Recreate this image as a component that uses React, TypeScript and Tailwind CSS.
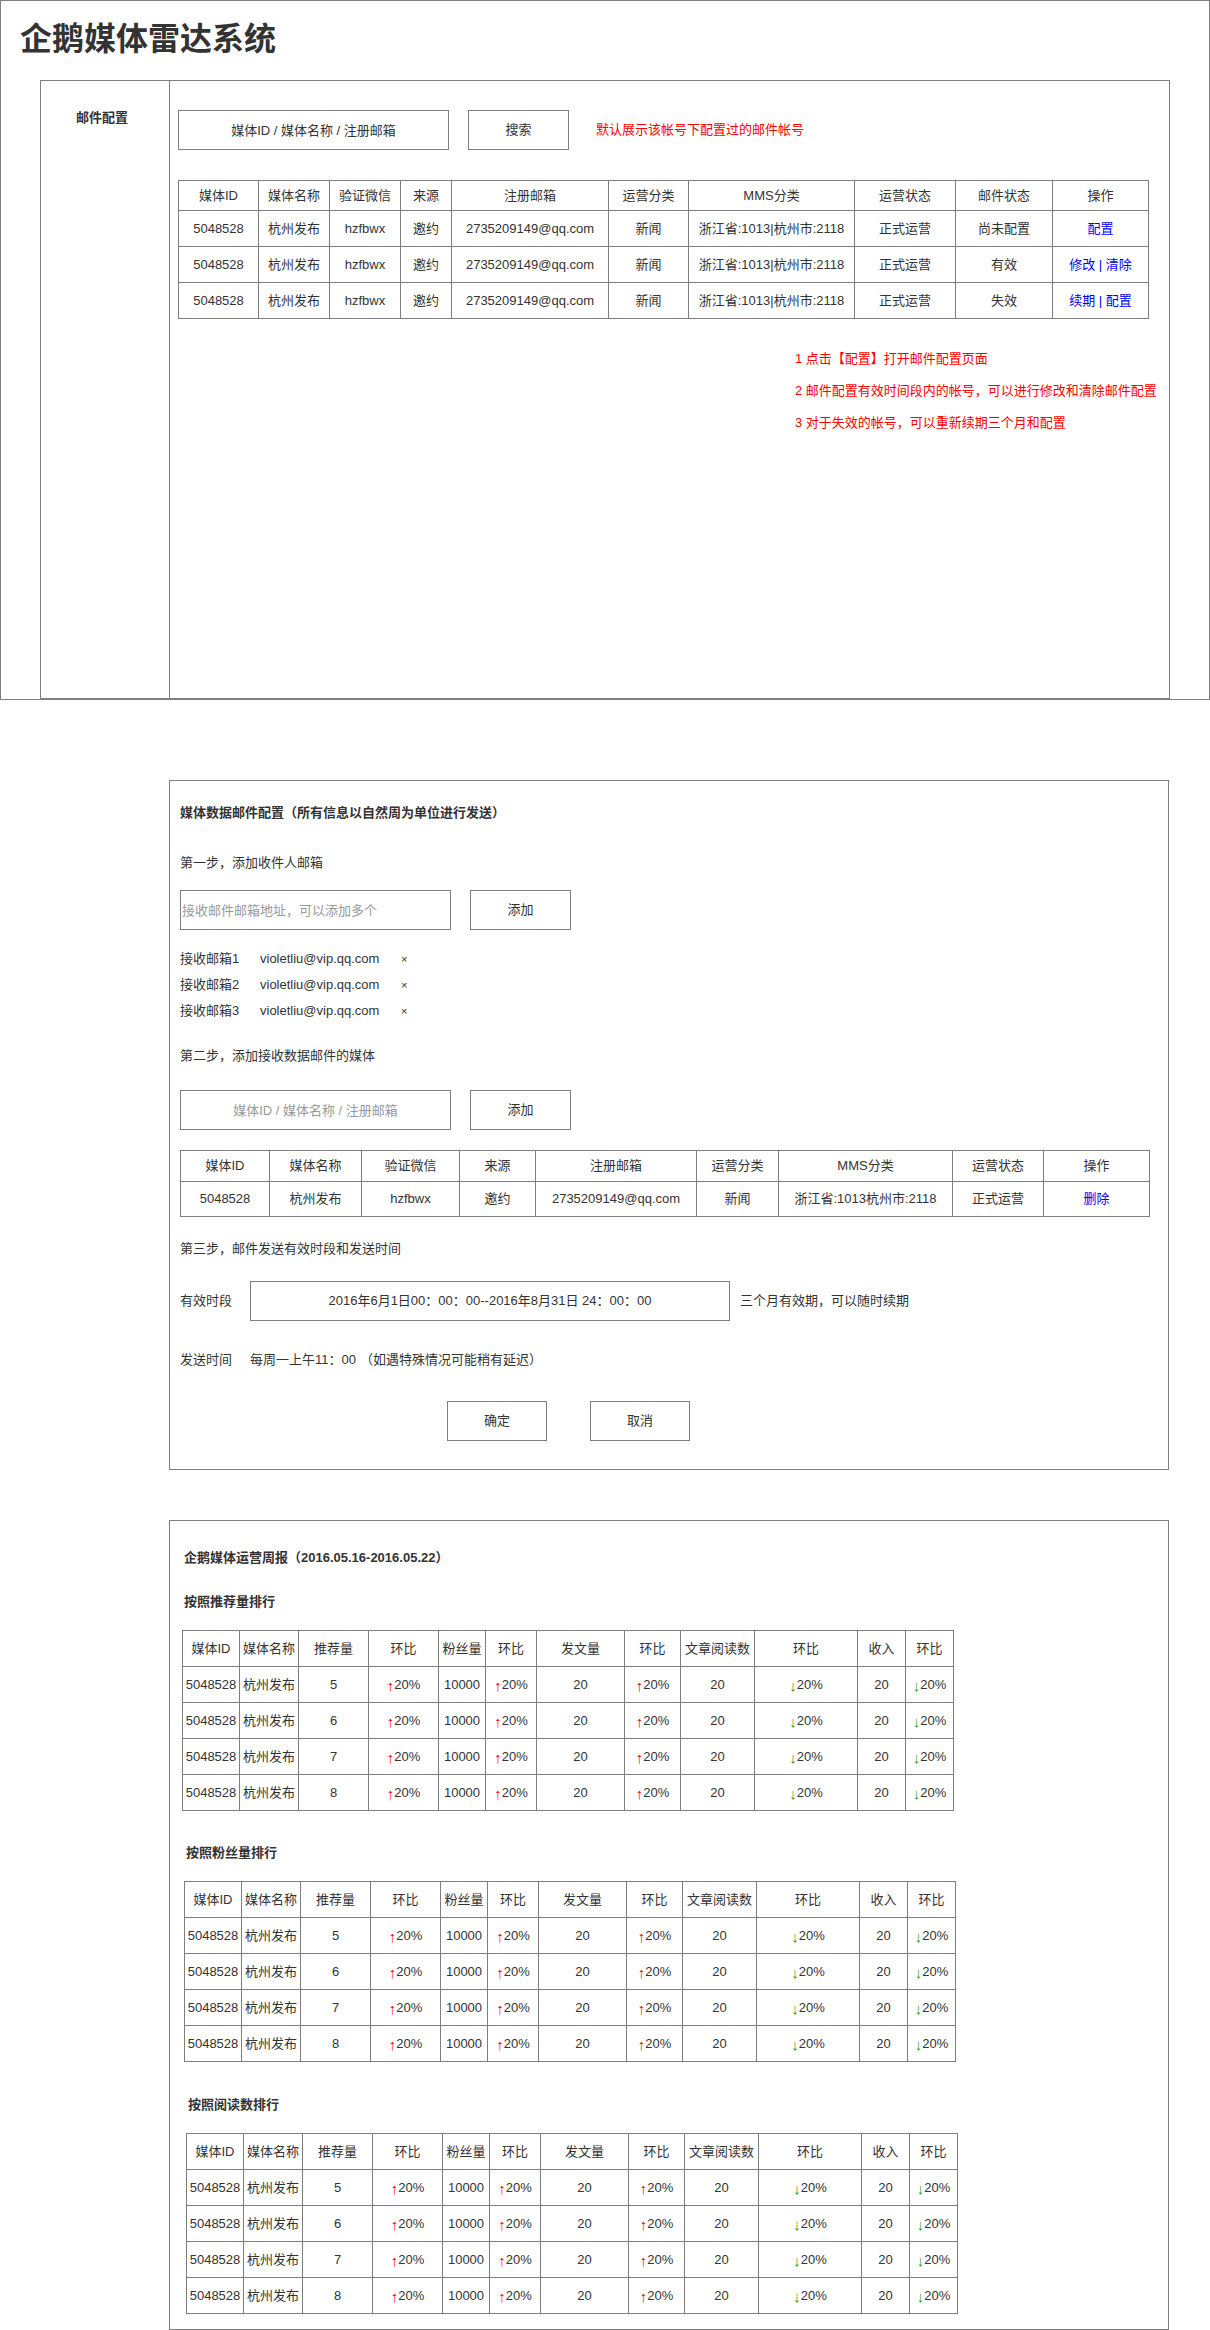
import type { ReactNode } from "react";

const line = "border border-[#7f7f7f]";

type GridProps = {
  cols: string[];
  head: string[];
  rows: ReactNode[][];
  headH: string;
  rowH: string;
  className?: string;
};

function Grid({ cols, head, rows, headH, rowH, className }: GridProps) {
  return (
    <table className={`table-fixed border-collapse ${className ?? ""}`}>
      <colgroup>
        {cols.map((c, i) => (
          <col key={i} className={c} />
        ))}
      </colgroup>
      <thead>
        <tr className={headH}>
          {head.map((h, i) => (
            <th key={i} className={`${line} p-0 font-normal text-center whitespace-nowrap`}>
              {h}
            </th>
          ))}
        </tr>
      </thead>
      <tbody>
        {rows.map((r, i) => (
          <tr key={i} className={rowH}>
            {r.map((c, j) => (
              <td key={j} className={`${line} p-0 text-center whitespace-nowrap`}>
                {c}
              </td>
            ))}
          </tr>
        ))}
      </tbody>
    </table>
  );
}

// thin tall arrows like in the mockup
const Up = () => (
  <span className="inline-block text-[15px] leading-none translate-y-[2px] text-[#ff0000]">↑</span>
);
const Down = () => (
  <span className="inline-block text-[15px] leading-none translate-y-[2px] text-[#1e9a1e]">↓</span>
);
const Link = ({ children }: { children: ReactNode }) => (
  <span className="text-[#0000ff]">{children}</span>
);

function RadarPanel() {
  const base = ["5048528", "杭州发布", "hzfbwx", "邀约", "2735209149@qq.com", "新闻", "浙江省:1013|杭州市:2118", "正式运营"];
  const rows: ReactNode[][] = [
    [...base, "尚未配置", <Link>配置</Link>],
    [...base, "有效", <Link>修改 | 清除</Link>],
    [...base, "失效", <Link>续期 | 配置</Link>],
  ];
  return (
    <div className={`w-[1210px] h-[700px] ${line}`}>
      <h1 className="ml-[19px] mt-[18px] h-[40px] leading-[40px] text-[32px] font-bold">企鹅媒体雷达系统</h1>
      <div className={`ml-[39px] mt-[21px] w-[1130px] h-[619px] ${line} flex`}>
        <div className="w-[129px] border-r border-[#7f7f7f] pl-[35px] pt-[27px]">
          <p className="font-bold leading-[20px]">邮件配置</p>
        </div>
        <div className="flex-1 pl-[8px] pt-[29px]">
          <div className="flex items-center h-[40px]">
            <input
              readOnly
              className={`w-[271px] h-[40px] ${line} text-center outline-none placeholder:text-[#333]`}
              placeholder="媒体ID / 媒体名称 / 注册邮箱"
            />
            <button className={`ml-[19px] w-[101px] h-[40px] ${line}`}>搜索</button>
            <span className="ml-[27px] text-[#ff0000]">默认展示该帐号下配置过的邮件帐号</span>
          </div>
          <Grid
            className="mt-[30px] w-[971px]"
            cols={["w-[80px]", "w-[71px]", "w-[71px]", "w-[51px]", "w-[157px]", "w-[80px]", "w-[166px]", "w-[101px]", "w-[97px]", "w-[96px]"]}
            head={["媒体ID", "媒体名称", "验证微信", "来源", "注册邮箱", "运营分类", "MMS分类", "运营状态", "邮件状态", "操作"]}
            rows={rows}
            headH="h-[30px]"
            rowH="h-[36px]"
          />
          <div className="ml-[617px] mt-[24px] leading-[32px] text-[#ff0000] whitespace-nowrap">
            <p>1 点击【配置】打开邮件配置页面</p>
            <p>2 邮件配置有效时间段内的帐号，可以进行修改和清除邮件配置</p>
            <p>3 对于失效的帐号，可以重新续期三个月和配置</p>
          </div>
        </div>
      </div>
    </div>
  );
}

function MailConfig() {
  const inbox = [1, 2, 3];
  return (
    <section className={`ml-[169px] mt-[80px] w-[1000px] h-[690px] ${line} pl-[10px] pt-[22px]`}>
      <h2 className="font-bold leading-[20px]">媒体数据邮件配置（所有信息以自然周为单位进行发送）</h2>
      <p className="mt-[30px] leading-[20px]">第一步，添加收件人邮箱</p>
      <div className="mt-[17px] flex h-[40px]">
        <input
          readOnly
          className={`w-[271px] h-[40px] ${line} pl-[1px] outline-none placeholder:text-[#999]`}
          placeholder="接收邮件邮箱地址，可以添加多个"
        />
        <button className={`ml-[19px] w-[101px] h-[40px] ${line}`}>添加</button>
      </div>
      <ul className="mt-[16px]">
        {inbox.map((n) => (
          <li key={n} className="flex h-[26px] items-center">
            <span className="w-[80px]">接收邮箱{n}</span>
            <span className="w-[141px]">violetliu@vip.qq.com</span>
            <span className="text-[11px]">×</span>
          </li>
        ))}
      </ul>
      <p className="mt-[22px] leading-[20px]">第二步，添加接收数据邮件的媒体</p>
      <div className="mt-[24px] flex h-[40px]">
        <input
          readOnly
          className={`w-[271px] h-[40px] ${line} text-center outline-none placeholder:text-[#999]`}
          placeholder="媒体ID / 媒体名称 / 注册邮箱"
        />
        <button className={`ml-[19px] w-[101px] h-[40px] ${line}`}>添加</button>
      </div>
      <Grid
        className="mt-[20px] w-[970px]"
        cols={["w-[89px]", "w-[92px]", "w-[98px]", "w-[76px]", "w-[161px]", "w-[82px]", "w-[174px]", "w-[91px]", "w-[106px]"]}
        head={["媒体ID", "媒体名称", "验证微信", "来源", "注册邮箱", "运营分类", "MMS分类", "运营状态", "操作"]}
        rows={[["5048528", "杭州发布", "hzfbwx", "邀约", "2735209149@qq.com", "新闻", "浙江省:1013杭州市:2118", "正式运营", <Link>删除</Link>]]}
        headH="h-[31px]"
        rowH="h-[35px]"
      />
      <p className="mt-[22px] leading-[20px]">第三步，邮件发送有效时段和发送时间</p>
      <div className="mt-[22px] flex items-center h-[40px]">
        <span className="w-[70px]">有效时段</span>
        <div className={`w-[480px] h-[40px] ${line} flex items-center justify-center`}>
          2016年6月1日00：00：00--2016年8月31日 24：00：00
        </div>
        <span className="ml-[10px]">三个月有效期，可以随时续期</span>
      </div>
      <p className="mt-[29px] leading-[20px] flex">
        <span className="w-[70px]">发送时间</span>
        <span>每周一上午11：00</span>
        <span className="ml-[4px]">（如遇特殊情况可能稍有延迟）</span>
      </p>
      <div className="mt-[31px] ml-[267px] flex gap-[43px]">
        <button className={`w-[100px] h-[40px] ${line}`}>确定</button>
        <button className={`w-[100px] h-[40px] ${line}`}>取消</button>
      </div>
    </section>
  );
}

const reportCols = ["w-[57px]", "w-[59px]", "w-[70px]", "w-[70px]", "w-[47px]", "w-[51px]", "w-[88px]", "w-[56px]", "w-[74px]", "w-[103px]", "w-[48px]", "w-[48px]"];
const reportHead = ["媒体ID", "媒体名称", "推荐量", "环比", "粉丝量", "环比", "发文量", "环比", "文章阅读数", "环比", "收入", "环比"];
const reportRows: ReactNode[][] = ["5", "6", "7", "8"].map((n) => [
  "5048528",
  "杭州发布",
  n,
  <><Up />20%</>,
  "10000",
  <><Up />20%</>,
  "20",
  <><Up />20%</>,
  "20",
  <><Down />20%</>,
  "20",
  <><Down />20%</>,
]);

function WeeklyReport() {
  return (
    <section className={`ml-[169px] mt-[50px] w-[1000px] h-[810px] ${line} pt-[27px]`}>
      <h2 className="ml-[14px] font-bold leading-[20px]">企鹅媒体运营周报（2016.05.16-2016.05.22）</h2>
      <h3 className="ml-[14px] mt-[24px] font-bold leading-[20px]">按照推荐量排行</h3>
      <Grid className="ml-[12px] mt-[18px] w-[772px]" cols={reportCols} head={reportHead} rows={reportRows} headH="h-[36px]" rowH="h-[36px]" />
      <h3 className="ml-[16px] mt-[32px] font-bold leading-[20px]">按照粉丝量排行</h3>
      <Grid className="ml-[14px] mt-[18px] w-[772px]" cols={reportCols} head={reportHead} rows={reportRows} headH="h-[36px]" rowH="h-[36px]" />
      <h3 className="ml-[18px] mt-[33px] font-bold leading-[20px]">按照阅读数排行</h3>
      <Grid className="ml-[16px] mt-[18px] w-[772px]" cols={reportCols} head={reportHead} rows={reportRows} headH="h-[36px]" rowH="h-[36px]" />
    </section>
  );
}

export default function App() {
  return (
    <div className="w-[1210px] h-[2330px] bg-white text-[13px] text-[#333] font-['Liberation_Sans','Noto_Sans_CJK_SC',sans-serif]">
      <RadarPanel />
      <MailConfig />
      <WeeklyReport />
    </div>
  );
}
